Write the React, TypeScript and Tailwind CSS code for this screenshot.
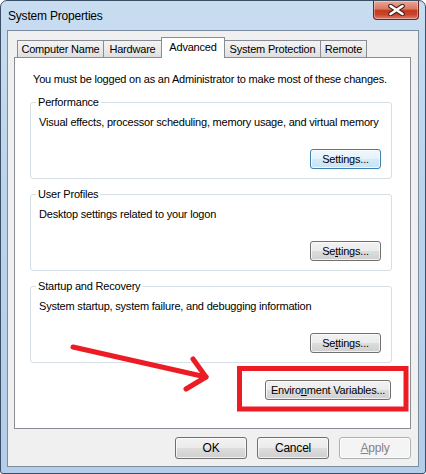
import type { ReactNode } from "react";

type Variant = "normal" | "focused" | "disabled";

function WinButton({
    children,
    className,
    variant = "normal",
}: {
    children: ReactNode;
    className: string;
    variant?: Variant;
}) {
    const look =
        variant === "focused"
            ? "border-[#3c7fb1] bg-[linear-gradient(to_bottom,#f1f8fd_0%,#e4f1fb_50%,#d6eaf8_50%,#c8e2f5_100%)] text-black"
            : variant === "disabled"
              ? "border-[#adb2b5] bg-[#f4f4f4] text-[#838383]"
              : "border-[#707070] bg-[linear-gradient(to_bottom,#f2f2f2_0%,#ebebeb_50%,#dddddd_50%,#cfcfcf_100%)] text-black";

    return (
        <div
            className={`flex items-center justify-center rounded-[3px] border shadow-[inset_0_0_0_1px_rgba(255,255,255,0.7)] ${look} ${className}`}
        >
            {children}
        </div>
    );
}

function GroupBox({ title, text, accel }: { title: string; text: string; accel: ReactNode }) {
    return (
        <div className="ml-[15px] flex h-[77px] w-[362px] flex-col rounded-[3px] border border-[#d5dfe5]">
            <div className="-mt-[8px] ml-[5px] h-[15px] w-fit bg-white px-[2px] leading-[15px]">{title}</div>
            <div className="mt-[5px] h-[15px] pl-[8px] leading-[15px]">{text}</div>
            <div className="mt-[19px] flex justify-end pr-[10px]">{accel}</div>
        </div>
    );
}

const tabs = [
    { label: "Computer Name", w: "w-[87px]" },
    { label: "Hardware", w: "w-[59px]" },
    { label: "Advanced", w: "w-[64px]", active: true },
    { label: "System Protection", w: "w-[97px]" },
    { label: "Remote", w: "w-[47px]" },
];

export default function App() {
    return (
        <div className="relative flex h-[474px] w-[426px] flex-col overflow-hidden rounded-t-[7px] rounded-b-[3px] border border-[#3b4f66] bg-[linear-gradient(to_bottom,#c9ddf1_0%,#bcd3ec_40%,#b4cde8_100%)] font-['Liberation_Sans',Arial,sans-serif] text-[11px] tracking-[-0.2px] text-black">
            {/* title bar */}
            <div className="flex h-[29px] shrink-0 items-center pl-[7px] text-[12px]">System Properties</div>

            <div className="absolute top-0 right-[6px] flex h-[19px] w-[46px] items-center justify-center rounded-b-[4px] border border-t-0 border-[#6e2519] bg-[linear-gradient(to_bottom,#e9a897_0%,#d77763_45%,#c53b20_52%,#c8442b_75%,#dc806a_100%)] shadow-[inset_0_0_0_1px_rgba(255,255,255,0.35)]">
                <svg width="17" height="12" viewBox="0 0 17 12">
                    <path d="M2.5 2 L14.5 10 M14.5 2 L2.5 10" stroke="#4a2019" strokeWidth="4.6" strokeLinecap="round" />
                    <path d="M2.5 2 L14.5 10 M14.5 2 L2.5 10" stroke="#ffffff" strokeWidth="2.6" strokeLinecap="round" />
                </svg>
            </div>

            {/* client area */}
            <div className="mx-[6px] flex h-[437px] shrink-0 flex-col border border-[#7d8da1] bg-[#f0f0f0]">
                <div className="flex h-[26px] items-end pt-[6px] pl-[9px]">
                    {tabs.map((t, i) =>
                        t.active ? (
                            <div
                                key={t.label}
                                className={`relative z-10 -mb-[1px] flex h-[21px] items-center justify-center border border-b-0 border-[#898c95] bg-white pb-[1px] ${t.w} ${i > 0 ? "-ml-[1px]" : ""}`}
                            >
                                {t.label}
                            </div>
                        ) : (
                            <div
                                key={t.label}
                                className={`flex h-[17px] items-center justify-center border border-b-0 border-[#898c95] bg-[linear-gradient(to_bottom,#f3f3f3_0%,#ebebeb_50%,#dfdfdf_100%)] ${t.w} ${i > 0 ? "-ml-[1px]" : ""}`}
                            >
                                {t.label}
                            </div>
                        ),
                    )}
                </div>

                <div className="mr-[7px] ml-[6px] flex h-[372px] flex-col border border-[#898c95] bg-white">
                    <div className="mt-[14px] h-[15px] pl-[18px] leading-[15px]">
                        You must be logged on as an Administrator to make most of these changes.
                    </div>

                    <div className="mt-[15px]">
                        <GroupBox
                            title="Performance"
                            text="Visual effects, processor scheduling, memory usage, and virtual memory"
                            accel={
                                <WinButton variant="focused" className="h-[20px] w-[71px]">
                                    Settings...
                                </WinButton>
                            }
                        />
                    </div>
                    <div className="mt-[15px]">
                        <GroupBox
                            title="User Profiles"
                            text="Desktop settings related to your logon"
                            accel={
                                <WinButton className="h-[20px] w-[71px]">
                                    <span>
                                        Se<span className="underline underline-offset-[1px]">t</span>tings...
                                    </span>
                                </WinButton>
                            }
                        />
                    </div>
                    <div className="mt-[15px]">
                        <GroupBox
                            title="Startup and Recovery"
                            text="System startup, system failure, and debugging information"
                            accel={
                                <WinButton className="h-[20px] w-[71px]">
                                    <span>
                                        Se<span className="underline underline-offset-[1px]">t</span>tings...
                                    </span>
                                </WinButton>
                            }
                        />
                    </div>

                    <div className="mt-[17px] flex justify-end pr-[19px]">
                        <WinButton className="h-[20px] w-[126px]">
                            <span>
                                Enviro<span className="underline underline-offset-[1px]">n</span>ment Variables...
                            </span>
                        </WinButton>
                    </div>
                </div>

                <div className="mt-[8px] flex justify-end gap-[10px] pr-[7px]">
                    <WinButton className="h-[22px] w-[72px] text-[12px]">OK</WinButton>
                    <WinButton className="h-[22px] w-[72px] text-[12px]">Cancel</WinButton>
                    <WinButton variant="disabled" className="h-[22px] w-[72px] text-[12px]">
                        <span>
                            <span className="underline underline-offset-[1px]">A</span>pply
                        </span>
                    </WinButton>
                </div>
            </div>

            {/* red annotation drawn over the dialog */}
            <svg
                className="pointer-events-none absolute top-[-1px] left-[-1px]"
                width="426"
                height="474"
                viewBox="0 0 426 474"
            >
                <g stroke="#ed1c24" strokeWidth="5" fill="none" strokeLinecap="round" strokeLinejoin="round">
                    <path d="M73 347 L206 377" />
                    <path d="M193 359 L206 377 L186 389" />
                </g>
                <rect x="239.5" y="368.5" width="166.5" height="40.5" stroke="#ed1c24" strokeWidth="5" fill="none" />
            </svg>
        </div>
    );
}
